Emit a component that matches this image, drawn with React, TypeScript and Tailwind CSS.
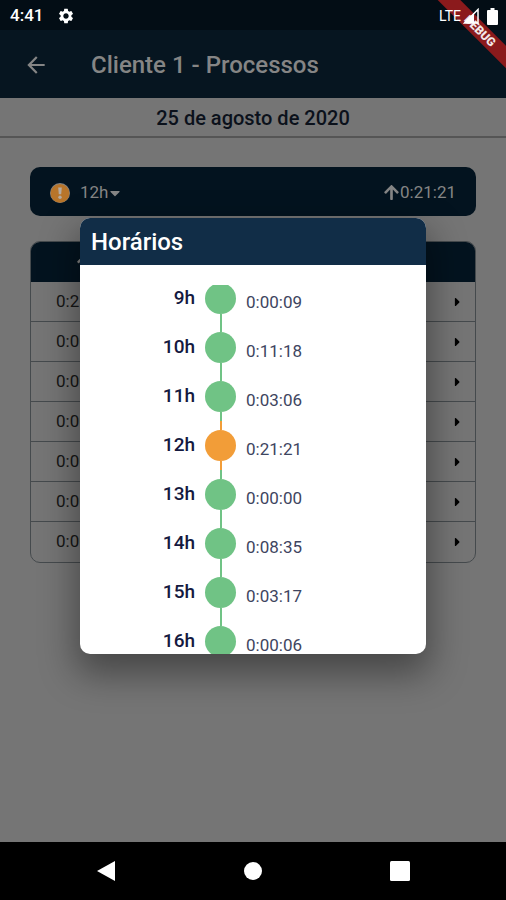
import { FaCaretDown, FaCaretRight, FaArrowUp } from 'react-icons/fa';
import { MdArrowBack, MdSettings } from 'react-icons/md';

interface Hour {
    label: string;
    time: string;
    alert?: boolean;
}

const hours: Hour[] = [
    { label: '9h', time: '0:00:09' },
    { label: '10h', time: '0:11:18' },
    { label: '11h', time: '0:03:06' },
    { label: '12h', time: '0:21:21', alert: true },
    { label: '13h', time: '0:00:00' },
    { label: '14h', time: '0:08:35' },
    { label: '15h', time: '0:03:17' },
    { label: '16h', time: '0:00:06' },
];

const processes = ['0:21', '0:00', '0:00', '0:00', '0:00', '0:00', '0:00'];

function StatusBar() {
    return (
        <div className="flex h-[30px] items-center justify-between bg-[#030d15] pl-[10px] pr-2 pt-[2px] text-white">
            <div className="flex items-center gap-[14px]">
                <span className="text-[17px] font-medium">4:41</span>
                <MdSettings className="h-[18px] w-[18px]" />
            </div>
            {/* the system icons stay above the debug ribbon */}
            <div className="relative z-10 flex items-center">
                <span className="text-[14px]">LTE</span>
                <svg viewBox="0 0 16 16" className="ml-[2px] mr-2 h-4 w-4">
                    <path d="M1.5 15L15 1.5V15Z" fill="none" stroke="currentColor" strokeWidth="1.5" />
                    <path d="M1 15L11 5V15Z" fill="currentColor" />
                </svg>
                <svg viewBox="0 0 11 17" className="h-[17px] w-[11px]" fill="currentColor">
                    <path d="M3.5 0h4v2H10a1 1 0 0 1 1 1v13a1 1 0 0 1-1 1H1a1 1 0 0 1-1-1V3a1 1 0 0 1 1-1h2.5z" />
                </svg>
            </div>
        </div>
    );
}

function DebugBanner() {
    return (
        <div className="pointer-events-none absolute right-0 top-0 h-20 w-20 overflow-hidden">
            <div className="absolute -right-[39px] top-[23px] w-[130px] rotate-45 bg-[#8b1a1c] text-center text-[12px] font-black leading-4 text-white/90">
                DEBUG
            </div>
        </div>
    );
}

function ProcessTable() {
    return (
        <table className="w-full table-fixed border-separate border-spacing-0 overflow-hidden rounded-[10px] border border-[#454a4d] text-[17px] text-[#161616]">
            <thead>
                <tr className="h-10 bg-[#03131f] text-[#858585]">
                    <th className="w-[106px] p-0 font-medium">
                        <FaArrowUp className="mx-auto h-4 w-4" />
                    </th>
                    <th className="p-0" />
                    <th className="w-9 p-0" />
                </tr>
            </thead>
            <tbody>
                {processes.map((time, i) => (
                    <tr key={i} className="group h-10">
                        <td className="border-b border-[#454a4d] p-0 pl-[25px] group-last:border-b-0">{time}</td>
                        <td className="border-b border-[#454a4d] p-0 group-last:border-b-0" />
                        <td className="border-b border-[#454a4d] p-0 group-last:border-b-0">
                            <FaCaretRight className="mx-auto h-[14px] text-black" />
                        </td>
                    </tr>
                ))}
            </tbody>
        </table>
    );
}

function HourRow({ hour }: { hour: Hour }) {
    const color = hour.alert ? 'bg-[#f29d38]' : 'bg-[#70c385]';

    return (
        <li className="flex h-[49px] items-center">
            <span className="w-[115px] text-right text-[19px] font-medium text-[#14193f]">{hour.label}</span>
            <span className="mx-[10px] flex h-full w-[31px] flex-col items-center">
                <span className={`w-[2px] flex-1 ${color}`} />
                <span className={`h-[31px] w-[31px] rounded-full ${color}`} />
                <span className={`w-[2px] flex-1 ${color}`} />
            </span>
            <span className="pt-2 text-[17px] text-[#3e4560]">{hour.time}</span>
        </li>
    );
}

function HoursDialog() {
    return (
        <div
            role="dialog"
            aria-labelledby="hours-title"
            className="flex-1 overflow-hidden rounded-[10px] bg-white shadow-[0_16px_36px_4px_rgba(0,0,0,0.4)]"
        >
            <h2 id="hours-title" className="bg-[#112d47] px-[11px] pt-[2px] text-[24px] font-medium leading-[45px] text-white">
                Horários
            </h2>
            <div className="mt-5 h-[369px] overflow-hidden">
                <ul className="-mt-[11px]">
                    {hours.map((hour) => (
                        <HourRow key={hour.label} hour={hour} />
                    ))}
                </ul>
            </div>
        </div>
    );
}

export default function App() {
    return (
        <div className="relative flex min-h-screen flex-col overflow-hidden bg-[#757575] font-[Roboto,sans-serif]">
            <StatusBar />
            <div className="relative flex flex-1 flex-col">
                <header className="flex h-[68px] items-center gap-[42px] bg-[#061520] px-[23px] pt-[2px] text-[#858585]">
                    <button aria-label="Voltar">
                        <MdArrowBack className="h-[26px] w-[26px]" />
                    </button>
                    <h1 className="text-[24px] font-medium">Cliente 1 - Processos</h1>
                </header>
                <div className="border-b-2 border-[#555] pt-[2px] text-center text-[20px] font-medium leading-9 text-[#0b111b]">
                    25 de agosto de 2020
                </div>
                <main className="flex flex-col gap-[25px] px-[30px] pt-[29px]">
                    <div className="flex h-[49px] items-center rounded-[10px] bg-[#03131f] px-5 pt-[2px] text-[17px] text-[#858585]">
                        <svg viewBox="0 0 20 20" className="mr-[10px] h-5 w-5">
                            <circle cx="10" cy="10" r="10" fill="#858585" />
                            <circle cx="10" cy="10.4" r="9.4" fill="#b8752a" />
                            <path d="M8.2 4.5h3.6l-.6 6.8H8.8z" fill="#b5aba0" />
                            <circle cx="10" cy="14.2" r="1.7" fill="#b5aba0" />
                        </svg>
                        <button className="flex items-center gap-[2px]">
                            12h
                            <FaCaretDown className="h-4 w-[10px]" />
                        </button>
                        <FaArrowUp className="ml-auto h-[17px] w-[17px]" />
                        <span>0:21:21</span>
                    </div>
                    <ProcessTable />
                </main>
                <div className="absolute inset-0 flex items-center px-20">
                    <HoursDialog />
                </div>
            </div>
            <nav className="flex h-[58px] items-center justify-around bg-black px-8 text-white">
                <button aria-label="Back">
                    <svg viewBox="0 0 20 20" className="h-5 w-5" fill="currentColor">
                        <path d="M19 0V20L1 10Z" />
                    </svg>
                </button>
                <button aria-label="Home">
                    <svg viewBox="0 0 20 20" className="h-5 w-5" fill="currentColor">
                        <circle cx="10" cy="10" r="9" />
                    </svg>
                </button>
                <button aria-label="Recents">
                    <svg viewBox="0 0 20 20" className="h-5 w-5" fill="currentColor">
                        <rect width="20" height="20" rx="1.5" />
                    </svg>
                </button>
            </nav>
            <DebugBanner />
        </div>
    );
}
